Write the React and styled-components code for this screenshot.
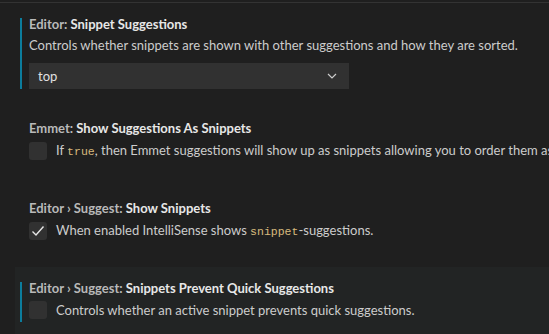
import styled, { createGlobalStyle } from "styled-components";

const Global = createGlobalStyle`
  html, body {
    margin: 0;
    padding: 0;
    background: #1f1f1f;
    overflow: hidden;
  }
  body {
    font-family: Lato, "Liberation Sans", sans-serif;
    font-size: 13px;
    color: #cccccc;
  }
`

const Page = styled.div`
  width: 549px;
  height: 334px;
  padding-top: 2px;
  box-sizing: border-box;
  overflow: hidden;
`

const TopLine = styled.div`
  height: 1px;
  background: #333333;
`

const List = styled.div`
  padding-left: 15px;
`

const Setting = styled.div`
  position: relative;
  padding: 12px 14px ${props => props.bool ? "26px" : "18px"} 14px;
  background: ${props => props.focused ? "#222424" : "transparent"};

  ${props => props.modified ? `
    &::before {
      content: "";
      position: absolute;
      left: 5px;
      top: 15px;
      bottom: ${props.bool ? "23px" : "18px"};
      width: 2px;
      background: #0c7d9d;
    }
  ` : ""}
`

const Title = styled.div`
  line-height: 18px;
  font-weight: 700;
  color: #e7e7e7;
  white-space: nowrap;
`

const Category = styled.span`
  color: #b9b9b9;
`

const Description = styled.div`
  margin-top: 3px;
  line-height: 18px;
  color: #cccccc;
  white-space: nowrap;
`

const Code = styled.span`
  font-family: "Liberation Mono", monospace;
  font-size: 11.5px;
  color: #d7ba7d;
`

const Select = styled.div`
  margin-top: 9px;
  width: 320px;
  height: 26px;
  box-sizing: border-box;
  background: #313131;
  display: flex;
  align-items: center;
  justify-content: space-between;
  padding: 0 12px 0 9px;
  color: #e0e0e0;
`

const CheckRow = styled.div`
  margin-top: 4px;
  display: flex;
  align-items: center;
  gap: 9px;
  line-height: 18px;
  white-space: nowrap;
`

const Box = styled.div`
  width: 18px;
  height: 18px;
  flex: none;
  border-radius: 3px;
  background: #313131;
  display: flex;
  align-items: center;
  justify-content: center;
`

const Chevron = () => (
  <svg width="10" height="6" viewBox="0 0 10 6">
    <polyline points="1,1 5,5 9,1" fill="none" stroke="#cccccc" strokeWidth="1.2" />
  </svg>
)

const Check = () => (
  <svg width="14" height="14" viewBox="0 0 14 14">
    <polyline points="1.5,7.5 5,11 12.5,2.5" fill="none" stroke="#e6e6e6" strokeWidth="1.4" />
  </svg>
)

const BoolSetting = ({ category, label, checked, children, ...rest }) => (
  <Setting bool {...rest}>
    <Title><Category>{category}</Category>{label}</Title>
    <CheckRow>
      <Box>{checked && <Check />}</Box>
      <span>{children}</span>
    </CheckRow>
  </Setting>
)

export default function App() {
  return (
    <Page>
      <Global />
      <TopLine />
      <List>
        <Setting modified>
          <Title><Category>Editor: </Category>Snippet Suggestions</Title>
          <Description>Controls whether snippets are shown with other suggestions and how they are sorted.</Description>
          <Select>
            <span>top</span>
            <Chevron />
          </Select>
        </Setting>
        <BoolSetting category="Emmet: " label="Show Suggestions As Snippets">
          If <Code>true</Code>, then Emmet suggestions will show up as snippets allowing you to order them as per <Code>editor.snippetSuggestions</Code> setting.
        </BoolSetting>
        <BoolSetting category="Editor › Suggest: " label="Show Snippets" checked>
          When enabled IntelliSense shows <Code>snippet</Code>-suggestions.
        </BoolSetting>
        <BoolSetting category="Editor › Suggest: " label="Snippets Prevent Quick Suggestions" focused modified>
          Controls whether an active snippet prevents quick suggestions.
        </BoolSetting>
      </List>
    </Page>
  );
}
